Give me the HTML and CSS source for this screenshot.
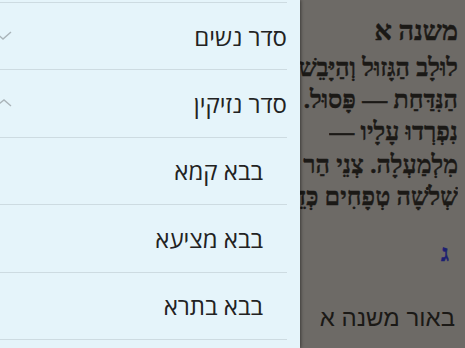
FILE: index.html
```html
<!DOCTYPE html>
<html lang="he">
<head>
    <meta charset="UTF-8">
    <meta name="viewport" content="width=device-width, initial-scale=1.0">
    <title>משנה סוכה</title>
    <link rel="stylesheet" href="styles.css">
</head>
<body>
    <div class="screen">
        <!-- Mishna text page (dimmed behind the drawer) -->
        <main class="page" dir="rtl">
            <div class="mishna-title">משנה א</div>
            <div class="mishna-line">לוּלָב הַגָּזוּל וְהַיָּבֵשׁ — פָּסוּל. שֶׁל אֲשֵׁרָה וְשֶׁל עִיר</div>
            <div class="mishna-line">הַנִּדַּחַת — פָּסוּל.</div>
            <div class="mishna-line">נִפְרְדוּ עָלָיו —</div>
            <div class="mishna-line">מִלְמַעְלָה. צְנֵי הַר הַבַּרְזֶל כְּשֵׁרוֹת. שִׁעוּר</div>
            <div class="mishna-line">שְׁלֹשָׁה טְפָחִים כְּדֵי שֶׁיְּנַעֲנַע בּוֹ</div>
            <a class="note-link" href="#">ג</a>
            <div class="explain-title">באור משנה א</div>
        </main>

        <!-- Navigation drawer -->
        <nav class="drawer" dir="rtl">
            <ul class="drawer-list">
                <li class="drawer-item">
                    <span class="item-label">סדר נשים</span>
                    <svg class="chevron" width="16" height="12" viewBox="0 0 16 12">
                        <polyline points="-1,2 7,9 15,2" fill="none" stroke="#aab4b9" stroke-width="1.4"/>
                    </svg>
                </li>
                <li class="drawer-item">
                    <span class="item-label">סדר נזיקין</span>
                    <svg class="chevron" width="16" height="12" viewBox="0 0 16 12">
                        <polyline points="-1,9 8,2 15,8" fill="none" stroke="#aab4b9" stroke-width="1.4"/>
                    </svg>
                </li>
                <li class="drawer-item sub">
                    <span class="item-label">בבא קמא</span>
                </li>
                <li class="drawer-item sub">
                    <span class="item-label">בבא מציעא</span>
                </li>
                <li class="drawer-item sub">
                    <span class="item-label">בבא בתרא</span>
                </li>
            </ul>
        </nav>
    </div>
</body>
</html>
```

FILE: styles.css
```css
* {
    margin: 0;
    padding: 0;
    box-sizing: border-box;
}

body {
    width: 465px;
    height: 348px;
    overflow: hidden;
    background: #6d6a66;
}

.screen {
    position: relative;
    width: 465px;
    height: 348px;
    overflow: hidden;
}

/* Page behind the drawer; only the part right of the drawer shows */
.page {
    height: 100%;
    padding: 18px 7px 0 298px;
    background: #6d6a66;
    color: #1b1916;
    font-family: 'Liberation Serif', serif;
    display: flex;
    flex-direction: column;
    align-items: flex-start;
}

.mishna-title {
    font-size: 27px;
    font-weight: bold;
    -webkit-text-stroke: 0.5px #1b1916;
    line-height: 26px;
    margin-bottom: 8px;
    white-space: nowrap;
}

.mishna-line {
    max-width: 100%;
    overflow: hidden;
    font-size: 25px;
    font-weight: bold;
    -webkit-text-stroke: 0.4px #1b1916;
    line-height: 32.2px;
    white-space: nowrap;
}

.note-link {
    margin: 28px 9px 0 0;
    font-size: 24px;
    font-weight: bold;
    color: #1c1f72;
    -webkit-text-stroke: 0.5px #1c1f72;
    text-decoration: none;
    line-height: 24px;
}

.explain-title {
    margin: 38px 3px 0 0;
    font-family: 'Liberation Sans', sans-serif;
    font-size: 24px;
    line-height: 30px;
    white-space: nowrap;
}

/* Drawer */
.drawer {
    position: absolute;
    top: 0;
    left: 0;
    width: 300px;
    height: 100%;
    background: #e5f4fa;
    overflow: hidden;
    box-shadow: 1px 0 3px rgba(0, 0, 0, 0.45);
    font-family: 'Open Sans', 'Liberation Sans', sans-serif;
}

.drawer-list {
    list-style: none;
    margin: 2px 13px 0 0;
    width: 287px;
    border-top: 1px solid #cddbe1;
}

.drawer-item {
    height: 67.4px;
    border-bottom: 1px solid #cddbe1;
    display: flex;
    align-items: center;
    justify-content: space-between;
}

.drawer-item.sub {
    padding-right: 24px;
}

.item-label {
    font-size: 24px;
    color: #222;
    white-space: nowrap;
}

.chevron {
    margin-left: -4px;
}
```
